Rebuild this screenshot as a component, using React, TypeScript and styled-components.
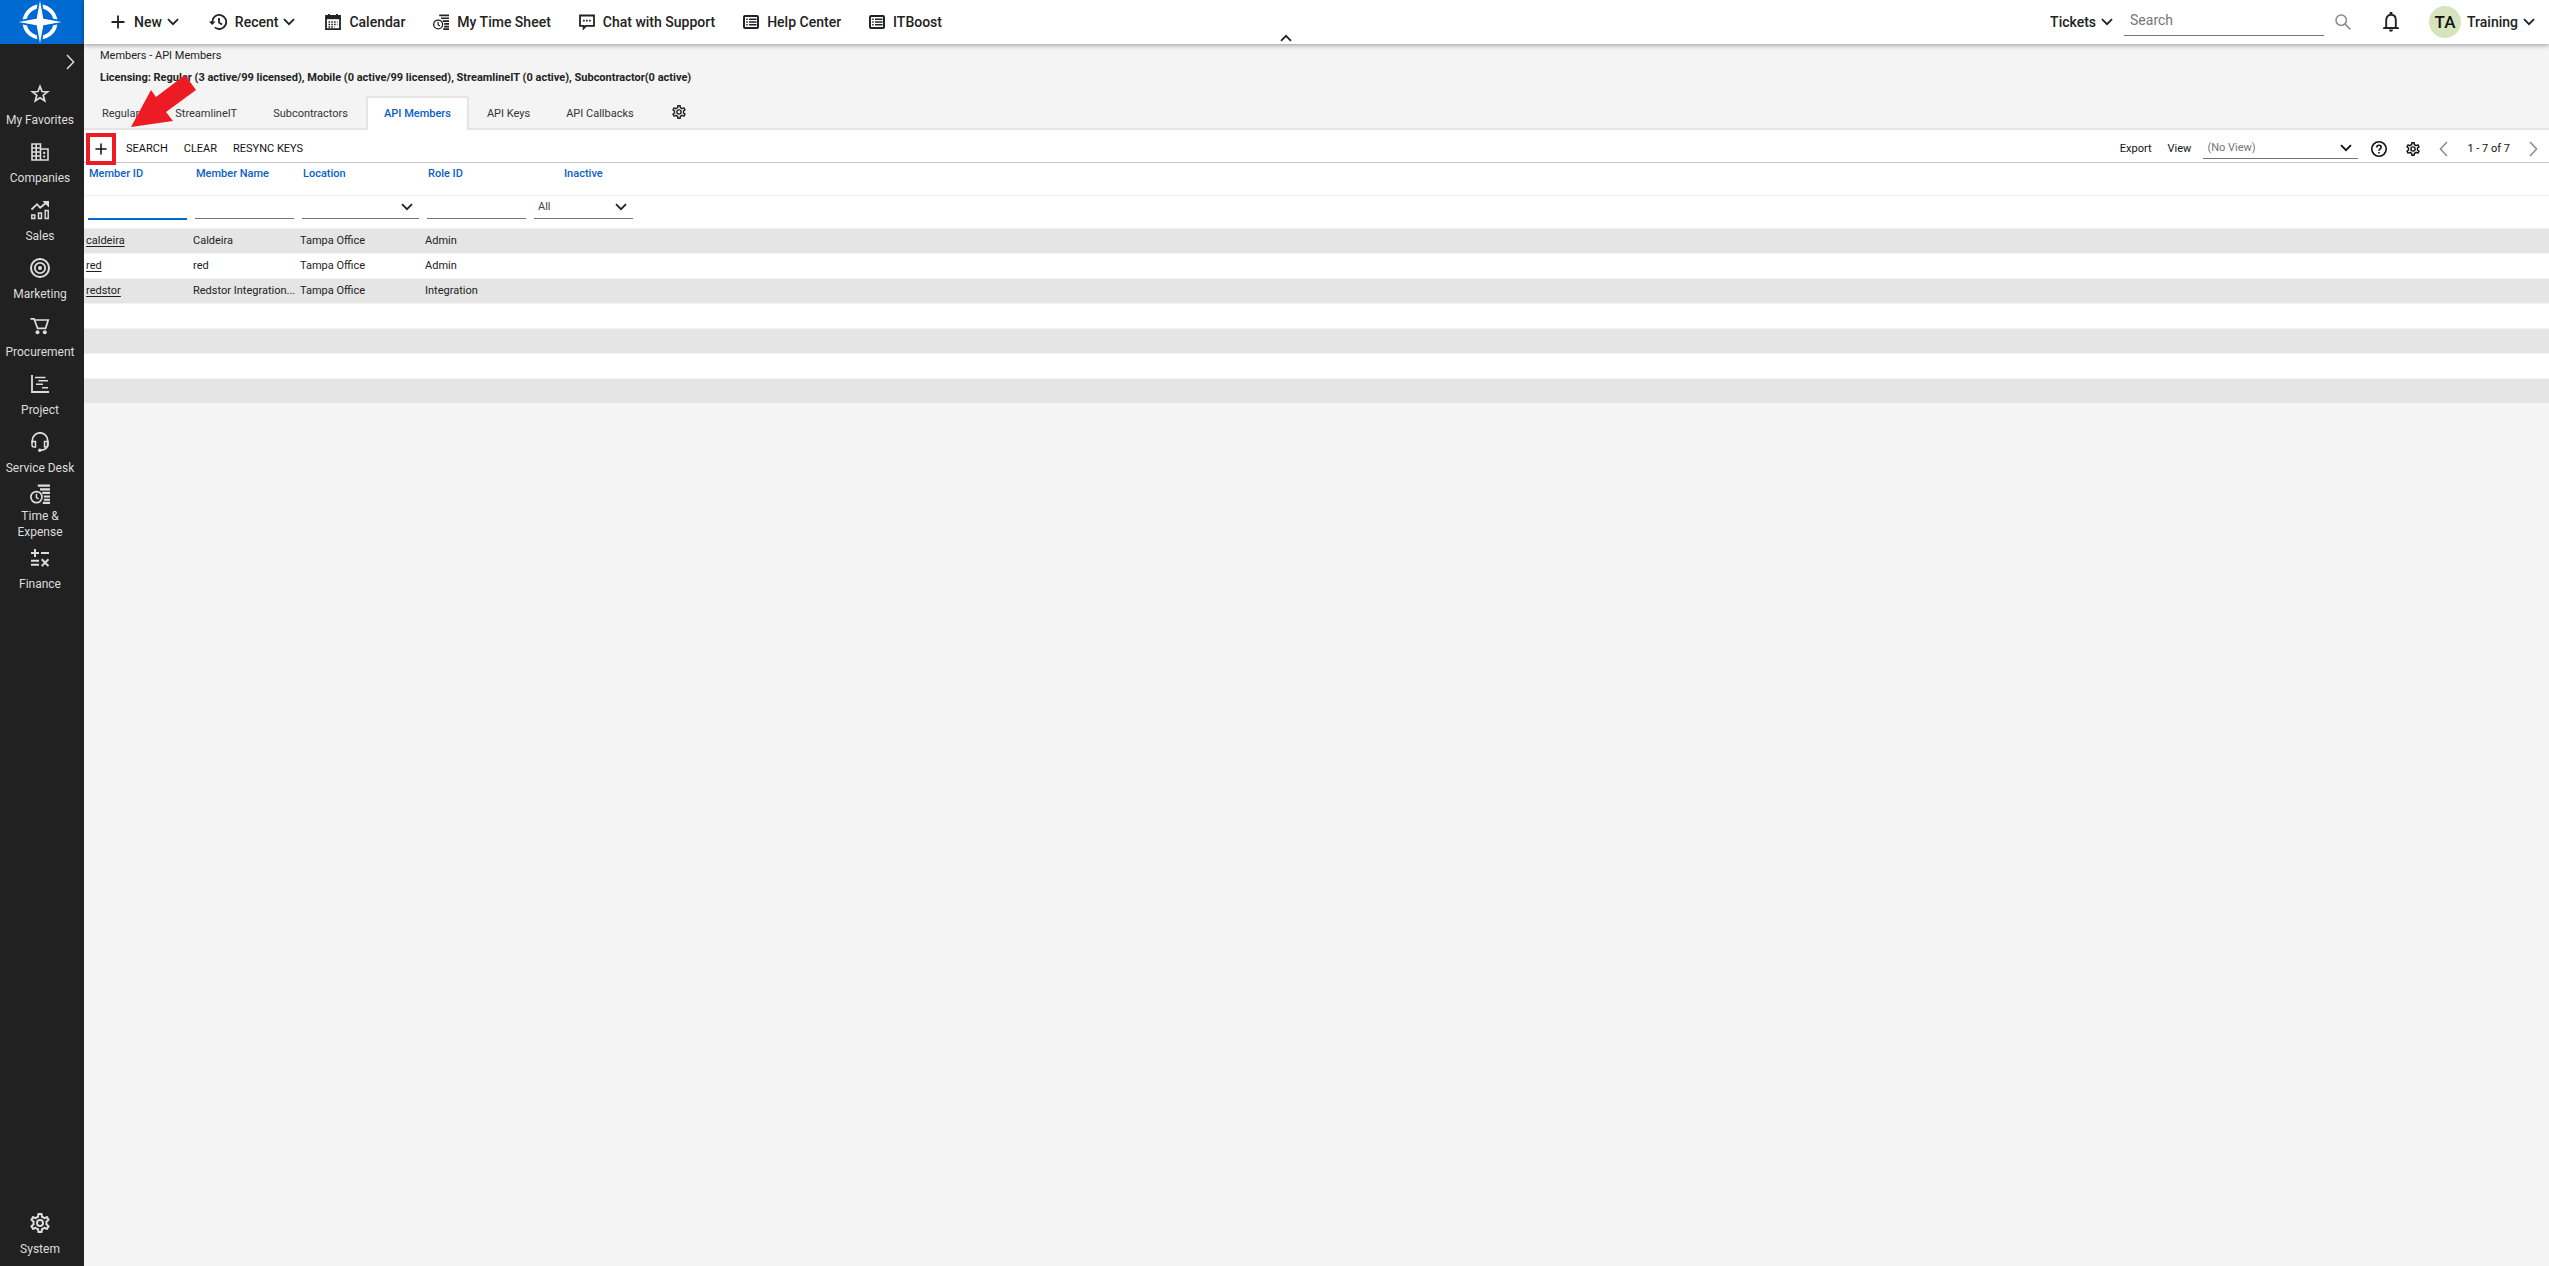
import React from "react";
import styled, { createGlobalStyle, css } from "styled-components";

const Global = createGlobalStyle`
  *, *::before, *::after { box-sizing: border-box; }
  body {
    margin: 0;
    background: #f4f4f4;
    color: #222;
    font: 400 12px/16px Roboto, "Liberation Sans", sans-serif;
  }
  button, input, select { font: inherit; color: inherit; margin: 0; border-radius: 0; }
`;

const Shell = styled.div`
  display: flex;
  min-height: 100vh;
`;

/* ---------- icons ---------- */

const Svg = styled.svg<{ $w: number; $h?: number }>`
  display: block;
  flex: none;
  width: ${(p) => p.$w}px;
  height: ${(p) => p.$h ?? p.$w}px;
  fill: none;
  stroke: currentColor;
  stroke-width: 2;
`;

const Chevron = ({ w = 12 }: { w?: number }) => (
  <Svg $w={w} $h={8} viewBox="0 0 12 8"><path d="M1 1.2 6 6.2 11 1.2" strokeWidth="1.8" /></Svg>
);
const Arrow = ({ left = false }: { left?: boolean }) => (
  <Svg $w={9} $h={16} viewBox="0 0 9 16">
    <path d={left ? "M8 1 1.4 8 8 15" : "M1 1 7.6 8 1 15"} strokeWidth="1.5" />
  </Svg>
);
const Plus = ({ w }: { w: number }) => (
  <Svg $w={w} viewBox="0 0 14 14"><path d="M7 .5v13M.5 7h13" strokeWidth="1.8" /></Svg>
);
const Gear = ({ w }: { w: number }) => (
  <Svg $w={w} viewBox="2 2 20 20">
    <g fill="currentColor" stroke="none">
      <path d="M19.43 12.98c.04-.32.07-.64.07-.98 0-.34-.03-.66-.07-.98l2.11-1.65c.19-.15.24-.42.12-.64l-2-3.46c-.09-.16-.26-.25-.44-.25-.06 0-.12.01-.17.03l-2.49 1c-.52-.4-1.08-.73-1.69-.98l-.38-2.65C14.46 2.18 14.25 2 14 2h-4c-.25 0-.46.18-.49.42l-.38 2.65c-.61.25-1.17.59-1.69.98l-2.49-1c-.06-.02-.12-.03-.18-.03-.17 0-.34.09-.43.25l-2 3.46c-.13.22-.07.49.12.64l2.11 1.65c-.04.32-.07.65-.07.98 0 .33.03.66.07.98l-2.11 1.65c-.19.15-.24.42-.12.64l2 3.46c.09.16.26.25.44.25.06 0 .12-.01.17-.03l2.49-1c.52.4 1.08.73 1.69.98l.38 2.65c.03.24.24.42.49.42h4c.25 0 .46-.18.49-.42l.38-2.65c.61-.25 1.17-.59 1.69-.98l2.49 1c.06.02.12.03.18.03.17 0 .34-.09.43-.25l2-3.46c.12-.22.07-.49-.12-.64l-2.11-1.65zm-1.98-1.71c.04.31.05.52.05.73 0 .21-.02.43-.05.73l-.14 1.13.89.7 1.08.84-.7 1.21-1.27-.51-1.04-.42-.9.68c-.43.32-.84.56-1.25.73l-1.06.43-.16 1.13-.2 1.35h-1.4l-.19-1.35-.16-1.13-1.06-.43c-.43-.18-.83-.41-1.23-.71l-.91-.7-1.06.43-1.27.51-.7-1.21 1.08-.84.89-.7-.14-1.13c-.03-.31-.05-.54-.05-.74s.02-.43.05-.73l.14-1.13-.89-.7-1.08-.84.7-1.21 1.27.51 1.04.42.9-.68c.43-.32.84-.56 1.25-.73l1.06-.43.16-1.13.2-1.35h1.39l.19 1.35.16 1.13 1.06.43c.43.18.83.41 1.23.71l.91.7 1.06-.43 1.27-.51.7 1.21-1.07.85-.89.7.14 1.13z" />
      <path d="M12 8a4 4 0 1 0 0 8 4 4 0 0 0 0-8zm0 6a2 2 0 1 1 0-4 2 2 0 0 1 0 4z" />
    </g>
  </Svg>
);
const Recent = () => (
  <Svg $w={18} $h={16} viewBox="0 0 18 16">
    <path d="M3.2 8a7 7 0 1 1 2.6 5.4M10 4v4.500l3 2" strokeWidth="1.800" />
    <path d="M0 7.500h6.500L3.200 11z" fill="currentColor" stroke="none" />
  </Svg>
);
const Calendar = () => (
  <Svg $w={16} viewBox="0 0 16 16">
    <path d="M1 2h14v13.200H1zM4 0v3M12 0v3" strokeWidth="1.800" />
    <path d="M1 3.500h14" strokeWidth="3.400" />
    <path d="M3.500 8h9M3.500 10.500h9M3.500 13h6" strokeWidth="1.300" strokeDasharray="1.600 1.200" />
  </Svg>
);
const TimeSheet = ({ w = 16 }: { w?: number }) => (
  <Svg $w={w} viewBox="0 0 18 18">
    <path d="M7 1.500h11M9 4.800h9M11 8h7M12.500 11.200H18M12.500 14.200H18M11.500 17H18" strokeWidth="1.900" />
    <circle cx="5.800" cy="11.800" r="5" strokeWidth="1.500" />
    <path d="M5.800 8.800v3.400l2 1.200" strokeWidth="1.300" />
  </Svg>
);
const Chat = () => (
  <Svg $w={16} viewBox="0 0 16 16">
    <path d="M1 1.500h14v10.300H6.800L4.600 14.400v-2.600H1z" strokeWidth="1.800" />
    <path d="M4 6.600h8" strokeWidth="1.700" strokeDasharray="1.700 1.300" />
  </Svg>
);
const ListBox = () => (
  <Svg $w={16} $h={14} viewBox="0 0 16 14">
    <rect x="1" y="1" width="14" height="12" rx="1" strokeWidth="2" />
    <path d="M3.200 4.300h1.500M3.200 7h1.500M3.200 9.700h1.500M6 4.300h7.500M6 7h7.500M6 9.700h7.500" strokeWidth="1.600" />
  </Svg>
);
const Magnifier = () => (
  <Svg $w={16} viewBox="0 0 16 16">
    <circle cx="6.200" cy="6.200" r="5.200" strokeWidth="1.500" /><path d="M10 10l5.300 5.300" strokeWidth="1.700" />
  </Svg>
);
const Bell = () => (
  <Svg $w={16} $h={20} viewBox="0 0 16 20">
    <path d="M3.200 16V8.200C3.200 5 5 2.800 8 2.800s4.800 2.200 4.800 5.400V16" strokeWidth="1.900" />
    <path d="M0 15.800 1.500 15h13l1.500.8v1.200H0zM6 17.500h4c0 1.400-.8 2.200-2 2.200s-2-.8-2-2.200zM6.600 0h2.800v2.500H6.600z" fill="currentColor" stroke="none" />
  </Svg>
);
const Help = () => (
  <Svg $w={16} viewBox="0 0 16 16">
    <circle cx="8" cy="8" r="7.200" strokeWidth="1.600" />
    <path d="M5.800 6.500C5.800 5.100 6.700 4.300 8 4.300s2.200.8 2.200 2c0 1.500-2.200 1.700-2.200 3.500M8 11v1.500" strokeWidth="1.600" />
  </Svg>
);
const Star = () => (
  <Svg $w={20} viewBox="0 0 20 20">
    <path d="M10 2.300l2 5.200 5.600.3-4.400 3.500 1.500 5.500L10 13.700l-4.700 3.100 1.500-5.500-4.400-3.500L8 7.500z" strokeWidth="1.700" />
  </Svg>
);
const Building = () => (
  <Svg $w={20} viewBox="0 0 20 20">
    <path d="M2 2h8.500v16H2zM10.500 7H18v11h-7.500M2 6h8.500M2 10h8.500M2 14h8.500M6.200 2v16" strokeWidth="1.600" />
    <path d="M14.200 9.800v5.800" strokeDasharray="2.200 1.400" />
  </Svg>
);
const Sales = () => (
  <Svg $w={20} viewBox="0 0 20 20">
    <path d="M1.500 9.500 7 4.200l3.200 3.600L17 2" strokeWidth="1.800" />
    <path d="M12.500 1H19v6.500z" fill="currentColor" stroke="none" />
    <path d="M1.800 15h3v3.500h-3zM8.500 13h3v5.500h-3zM15.200 10.500h3v8h-3z" strokeWidth="1.500" />
  </Svg>
);
const Target = () => (
  <Svg $w={20} viewBox="0 0 20 20">
    <circle cx="10" cy="10" r="9" /><circle cx="10" cy="10" r="5.200" strokeWidth="1.800" />
    <circle cx="10" cy="10" r="2" fill="currentColor" stroke="none" />
  </Svg>
);
const Cart = () => (
  <Svg $w={20} viewBox="0 0 20 20">
    <path d="M.5 2.800H4l3.600 9.500h8l2.600-8.300H4.500" strokeWidth="1.700" />
    <circle cx="7.500" cy="16.200" r="2" fill="currentColor" stroke="none" />
    <circle cx="14.800" cy="16.200" r="2" fill="currentColor" stroke="none" />
  </Svg>
);
const Project = () => (
  <Svg $w={20} viewBox="0 0 20 20">
    <path d="M2 1v17h17" strokeWidth="1.800" />
    <path d="M5 3.500h10.500M8.500 6.800H18M6 10.300h7M12 13.800h6" strokeWidth="1.600" />
  </Svg>
);
const Headset = () => (
  <Svg $w={20} viewBox="0 0 20 20">
    <path d="M2.300 11V8.500a7.700 7.700 0 0 1 15.400 0V12c0 4-2.500 6-7.200 6.200" strokeWidth="1.700" />
    <path d="M2 9.500h3.500V15H4a2 2 0 0 1-2-2zM18 9.500h-3.500V15H16a2 2 0 0 0 2-2z" strokeWidth="1.500" />
    <circle cx="9.800" cy="18.200" r="1.700" fill="currentColor" stroke="none" />
  </Svg>
);
const Finance = () => (
  <Svg $w={20} viewBox="0 0 20 20">
    <path d="M1 5h8M5 1v8M11 5h8M1 12.800h8M1 16.800h8M11.700 11.300l6.800 6.800M18.500 11.300l-6.800 6.800" strokeWidth="2" />
  </Svg>
);
const Compass = () => (
  <Svg $w={44} viewBox="0 0 44 44">
    <circle cx="22" cy="22" r="15.500" stroke="#fff" strokeWidth="4" />
    <path d="M22-1 26 18 45 22 26 26 22 45 18 26-1 22 18 18z" fill="#fff" stroke="#006ad3" strokeWidth="2.500" />
    <path d="M22 .5 25.300 18.700 43.500 22 25.300 25.300 22 43.500 18.700 25.300.5 22 18.700 18.700z" fill="#fff" stroke="none" />
  </Svg>
);

/* ---------- sidebar ---------- */

const Side = styled.nav`
  display: flex;
  flex-direction: column;
  flex: none;
  width: 84px;
  background: #212121;
  color: #ddd;
`;
const Logo = styled.a`
  display: flex;
  justify-content: center;
  height: 44px;
  padding-right: 4px;
  background: #006ad3;
`;
const Plain = styled.button`
  display: flex;
  align-items: center;
  padding: 0;
  border: 0;
  background: none;
  white-space: nowrap;
  cursor: pointer;
`;
const Expand = styled(Plain)`
  justify-content: flex-end;
  height: 34px;
  padding: 2px 9px 0 0;
`;
const SideItem = styled.a<{ $tight?: boolean }>`
  display: flex;
  flex-direction: column;
  align-items: center;
  justify-content: center;
  gap: ${(p) => (p.$tight ? 4 : 8)}px;
  height: 58px;
  padding: 0 14px 2px 10px;
  text-align: center;
  color: inherit;
  text-decoration: none;
  span { white-space: ${(p) => (p.$tight ? "normal" : "nowrap")}; }
`;
const SideFoot = styled.div`
  margin-top: auto;
  padding-bottom: 1px;
`;

const modules: [string, React.ReactNode][] = [
  ["My Favorites", <Star />],
  ["Companies", <Building />],
  ["Sales", <Sales />],
  ["Marketing", <Target />],
  ["Procurement", <Cart />],
  ["Project", <Project />],
  ["Service Desk", <Headset />],
  ["Time & Expense", <TimeSheet w={20} />],
  ["Finance", <Finance />],
];

/* ---------- top bar ---------- */

const Main = styled.div`
  display: flex;
  flex-direction: column;
  flex: 1;
  min-width: 0;
`;
const TopBar = styled.header`
  position: relative;
  z-index: 1;
  display: flex;
  align-items: center;
  justify-content: space-between;
  height: 44px;
  padding: 0 14px 0 27px;
  background: #fff;
  box-shadow: 0 1px 5px rgba(0, 0, 0, 0.4);
  font-size: 14px;
  font-weight: 500;
`;
const Group = styled.div<{ $gap: number }>`
  display: flex;
  align-items: center;
  gap: ${(p) => p.$gap}px;
`;
const MenuButton = styled(Plain)<{ $gap?: number; $menu?: boolean }>`
  gap: ${(p) => p.$gap ?? 8}px;
  padding-right: ${(p) => (p.$menu ? 2 : 0)}px;
`;
const WithCaret = styled.span`
  display: flex;
  align-items: center;
  gap: 5px;
`;
const SearchInput = styled.input`
  width: 200px;
  height: 27px;
  padding: 0 6px 4px;
  border: 0;
  border-bottom: 1px solid #757575;
  background: none;
  font-weight: 400;
  outline: 0;
  &::placeholder { color: #757575; opacity: 1; }
`;
const Avatar = styled.span`
  display: grid;
  place-items: center;
  width: 32px;
  height: 32px;
  border-radius: 50%;
  background: #d7e3bc;
  color: #111;
  font-size: 17px;
`;
const Collapse = styled(Plain)`
  position: absolute;
  left: calc(50% - 37px);
  bottom: 2px;
  svg { transform: rotate(180deg); }
`;
const Muted = styled(Plain)`
  color: #8a8a8a;
`;

/* ---------- page heading and tabs ---------- */

const Heading = styled.div`
  padding: 4px 16px 0;
  font-size: 11px;
`;
const Title = styled.h1`
  margin: 0;
  font: inherit;
  line-height: 16px;
`;
const Licensing = styled.p`
  margin: 6px 0 0;
  font-weight: 700;
  line-height: 16px;
`;
const Tabs = styled.div`
  display: flex;
  align-items: flex-end;
  height: 43px;
  margin-top: 1px;
  border-bottom: 2px solid #e4e4e4;
  font-size: 11px;
`;
const Tab = styled.button<{ $active?: boolean }>`
  height: 34px;
  margin-bottom: -2px;
  padding: 0 16px;
  border: 2px solid transparent;
  border-bottom: 0;
  background: none;
  color: #333;
  cursor: pointer;
  ${(p) =>
    p.$active &&
    css`
      border-color: #e4e4e4;
      border-radius: 3px 3px 0 0;
      background: #fff;
      color: #0a5fc8;
      font-weight: 500;
    `}
`;
const TabGear = styled(Plain)`
  height: 32px;
  padding-left: 20px;
`;

/* ---------- grid ---------- */

const ToolBar = styled.div`
  display: flex;
  align-items: center;
  justify-content: space-between;
  height: 33px;
  padding: 5px 11px 0 2px;
  border-bottom: 1px solid #c8c8c8;
  background: #fff;
  font-size: 11px;
  color: #111;
`;
const AddButton = styled(Plain)`
  position: relative;
  justify-content: center;
  width: 30px;
  height: 32px;
  border: 4px solid #ed1c24;
`;
const Pointer = styled.svg`
  position: absolute;
  left: 41px;
  bottom: 32px;
  width: 66px;
  height: 54px;
  fill: #ed1c24;
`;
const SelectWrap = styled.span`
  display: grid;
  align-items: center;
  height: 23px;
  border-bottom: 1px solid #757575;
  > * { grid-area: 1 / 1; }
  svg { justify-self: end; margin-right: 6px; pointer-events: none; }
`;
const Select = styled.select`
  width: 100%;
  height: 22px;
  padding: 0 4px;
  border: 0;
  background: none;
  color: #444;
  appearance: none;
  outline: 0;
`;
const ViewPicker = styled.label`
  display: flex;
  align-items: center;
  gap: 12px;
  ${SelectWrap} { width: 155px; height: 20px; }
  ${Select} { height: 18px; color: #757575; }
`;
const Table = styled.table`
  width: 100%;
  table-layout: fixed;
  border-collapse: separate;
  border-spacing: 0;
  background: #fff;
  font-size: 11px;
  line-height: 16px;
`;
const HeadCell = styled.th<{ $indent?: boolean }>`
  height: 33px;
  padding: 3px 0 0 ${(p) => (p.$indent ? 34 : 5)}px;
  border-bottom: 1px solid #f0f0f0;
  color: #0a5fc8;
  font-weight: 500;
  text-align: left;
  vertical-align: top;
`;
const FilterCell = styled.td`
  height: 33px;
  padding: 0 4px;
  border-bottom: 1px solid #f0f0f0;
  vertical-align: top;
`;
const Filter = styled.input<{ $active?: boolean }>`
  display: block;
  width: 100%;
  height: ${(p) => (p.$active ? 24 : 23)}px;
  padding: 0 4px;
  border: 0;
  border-bottom: ${(p) => (p.$active ? "2px solid #006ad3" : "1px solid #757575")};
  background: none;
  outline: 0;
`;
const Row = styled.tr`
  &:nth-child(odd) { background: #e5e5e5; }
`;
const Cell = styled.td`
  height: 25px;
  padding: 0 0 0 2px;
  border-bottom: 1px solid #f4f4f4;
  white-space: nowrap;
  a { color: inherit; text-underline-offset: 2px; }
`;

const columns = [
  { name: "Member ID", width: 107 },
  { name: "Member Name", width: 107 },
  { name: "Location", width: 125 },
  { name: "Role ID", width: 107 },
  { name: "Inactive", width: 107 },
];
const members = [
  ["caldeira", "Caldeira", "Tampa Office", "Admin"],
  ["red", "red", "Tampa Office", "Admin"],
  ["redstor", "Redstor Integration...", "Tampa Office", "Integration"],
  [], [], [], [],
];

const Drop = ({ label, value }: { label: string; value: string }) => (
  <SelectWrap>
    <Select aria-label={label}><option>{value}</option></Select>
    <Chevron />
  </SelectWrap>
);

export default function App() {
  return (
    <Shell>
      <Global />
      <Side>
        <Logo href="#" aria-label="Home"><Compass /></Logo>
        <Expand aria-label="Expand menu"><Arrow /></Expand>
        {modules.map(([name, icon]) => (
          <SideItem key={name} href="#" $tight={name.startsWith("Time")}>
            {icon}
            <span>{name}</span>
          </SideItem>
        ))}
        <SideFoot>
          <SideItem href="#"><Gear w={20} /><span>System</span></SideItem>
        </SideFoot>
      </Side>

      <Main>
        <TopBar>
          <Group $gap={28}>
            <MenuButton $menu $gap={9}><Plus w={14} /><WithCaret>New <Chevron /></WithCaret></MenuButton>
            <MenuButton $menu><Recent /><WithCaret>Recent <Chevron /></WithCaret></MenuButton>
            <MenuButton><Calendar />Calendar</MenuButton>
            <MenuButton><TimeSheet />My Time Sheet</MenuButton>
            <MenuButton><Chat />Chat with Support</MenuButton>
            <MenuButton><ListBox />Help Center</MenuButton>
            <MenuButton><ListBox />ITBoost</MenuButton>
          </Group>
          <Collapse aria-label="Collapse header"><Chevron /></Collapse>
          <Group $gap={11}>
            <MenuButton><WithCaret>Tickets <Chevron /></WithCaret></MenuButton>
            <SearchInput aria-label="Search" placeholder="Search" />
            <Group $gap={32}>
              <Muted aria-label="Run search"><Magnifier /></Muted>
              <Group $gap={30}>
                <Plain aria-label="Notifications"><Bell /></Plain>
                <MenuButton $gap={6}><Avatar>TA</Avatar><WithCaret>Training <Chevron /></WithCaret></MenuButton>
              </Group>
            </Group>
          </Group>
        </TopBar>

        <Heading>
          <Title>Members - API Members</Title>
          <Licensing>
            Licensing: Regular (3 active/99 licensed), Mobile (0 active/99 licensed), StreamlineIT (0 active), Subcontractor(0 active)
          </Licensing>
        </Heading>

        <Tabs>
          {["Regular", "StreamlineIT", "Subcontractors", "API Members", "API Keys", "API Callbacks"].map((t) => (
            <Tab key={t} $active={t === "API Members"}>{t}</Tab>
          ))}
          <TabGear aria-label="Tab settings"><Gear w={14} /></TabGear>
        </Tabs>

        <ToolBar>
          <Group $gap={16}>
            <Group $gap={10}>
              <AddButton aria-label="Add member">
                <Plus w={12} />
                <Pointer viewBox="0 0 66 54"><path d="M0 52 20 15 25 22 54 0 65 15 35 37 42 46z" /></Pointer>
              </AddButton>
              <Plain>SEARCH</Plain>
            </Group>
            <Plain>CLEAR</Plain>
            <Plain>RESYNC KEYS</Plain>
          </Group>
          <Group $gap={19}>
            <Group $gap={13}>
              <Group $gap={16}>
                <Plain>Export</Plain>
                <ViewPicker>View <Drop label="View" value="(No View)" /></ViewPicker>
              </Group>
              <Group $gap={19}>
                <Plain aria-label="Help"><Help /></Plain>
                <Plain aria-label="Settings"><Gear w={14} /></Plain>
              </Group>
            </Group>
            <Muted aria-label="Previous page"><Arrow left /></Muted>
            <span>1 - 7 of 7</span>
            <Muted aria-label="Next page"><Arrow /></Muted>
          </Group>
        </ToolBar>

        <Table>
          <colgroup>
            {columns.map((c) => <col key={c.name} style={{ width: c.width }} />)}
            <col />
          </colgroup>
          <thead>
            <tr>
              {columns.map((c) => (
                <HeadCell key={c.name} scope="col" $indent={c.name === "Inactive"}>{c.name}</HeadCell>
              ))}
              <HeadCell as="td" />
            </tr>
            <tr>
              <FilterCell><Filter $active aria-label="Filter Member ID" /></FilterCell>
              <FilterCell><Filter aria-label="Filter Member Name" /></FilterCell>
              <FilterCell><Drop label="Filter Location" value="" /></FilterCell>
              <FilterCell><Filter aria-label="Filter Role ID" /></FilterCell>
              <FilterCell><Drop label="Filter Inactive" value="All" /></FilterCell>
              <FilterCell />
            </tr>
          </thead>
          <tbody>
            {members.map((m, i) => (
              <Row key={i}>
                <Cell>{m[0] && <a href="#">{m[0]}</a>}</Cell>
                <Cell>{m[1]}</Cell>
                <Cell>{m[2]}</Cell>
                <Cell>{m[3]}</Cell>
                <Cell />
                <Cell />
              </Row>
            ))}
          </tbody>
        </Table>
      </Main>
    </Shell>
  );
}
